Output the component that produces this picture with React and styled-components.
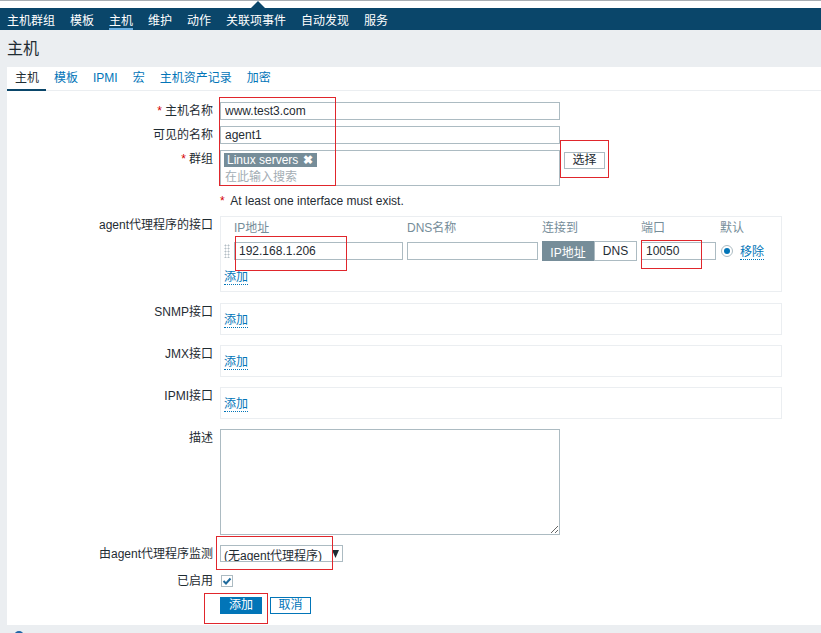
import React from 'react';
import styled, { createGlobalStyle, css } from 'styled-components';

const GlobalStyle = createGlobalStyle`
  html, body { margin: 0; padding: 0; background: #ebeef1; }
  body {
    font-family: Arial, "Liberation Sans", "Noto Sans CJK SC", sans-serif;
    font-size: 12px;
    color: #1f2c33;
  }
  * { box-sizing: border-box; }
`;

const FONT = `Arial, "Liberation Sans", "Noto Sans CJK SC", sans-serif`;

const Page = styled.div`
  position: relative;
  width: 821px;
  height: 633px;
  overflow: hidden;
  background: #ebeef1;
`;

const TopStrip = styled.div`
  height: 8px;
  background: #fff;
  border-top: 1px solid #a9aeb3;
`;

const Nav = styled.nav`
  position: relative;
  height: 22px;
  background: #0a466a;
  display: flex;
  gap: 1px;
  &::before {
    content: '';
    position: absolute;
    left: 251px;
    top: -7px;
    border-left: 7px solid transparent;
    border-right: 7px solid transparent;
    border-bottom: 7px solid #0a466a;
  }
`;

const NavItem = styled.a`
  position: relative;
  display: flex;
  align-items: center;
  padding: 0 7px;
  color: #fff;
  font-size: 12px;
  text-decoration: none;
  white-space: nowrap;
  ${(p) =>
    p.$active &&
    css`
      &::after {
        content: '';
        position: absolute;
        left: 7px;
        right: 7px;
        bottom: 0;
        height: 2px;
        background: #6aaee0;
      }
    `}
`;

const Header = styled.header`
  height: 37px;
  padding: 9px 7px 0;
`;

const Title = styled.h1`
  margin: 0;
  font-size: 16px;
  font-weight: normal;
  line-height: 20px;
  color: #1f2c33;
`;

const Panel = styled.section`
  margin-left: 7px;
  background: #fff;
  padding-bottom: 10px;
`;

const Tabs = styled.ul`
  display: flex;
  margin: 0;
  padding: 0;
  list-style: none;
  height: 24px;
  border-bottom: 1px solid #ebeef1;
`;

const Tab = styled.li`
  position: relative;
  padding: 0 7px 0 8px;
  line-height: 23px;
  white-space: nowrap;
  color: ${(p) => (p.$active ? '#1f2c33' : '#0275b8')};
  ${(p) =>
    p.$active &&
    css`
      &::after {
        content: '';
        position: absolute;
        left: 0;
        right: 0;
        bottom: -1px;
        height: 2px;
        background: #0a466a;
      }
    `}
`;

const Form = styled.div`
  padding-top: 11px;
`;

const Row = styled.div`
  display: grid;
  grid-template-columns: 206px 1fr;
  column-gap: 7px;
  margin-bottom: ${(p) => (p.$mb ?? 6)}px;
`;

const Label = styled.label`
  text-align: right;
  line-height: 18px;
  white-space: nowrap;
`;

const Req = styled.span`
  color: #d40000;
  margin-right: 3px;
`;

const Field = styled.div`
  display: flex;
  align-items: flex-start;
  gap: ${(p) => (p.$gap ?? 4)}px;
  min-height: 18px;
`;

const TextInput = styled.input`
  width: ${(p) => p.$w || 340}px;
  height: 18px;
  border: 1px solid #acbbc2;
  padding: 0 4px;
  font-family: ${FONT};
  font-size: 12px;
  color: #1f2c33;
  background: #fff;
  outline: none;
  margin: 0;
`;

const MultiSelect = styled.div`
  width: 340px;
  height: 36px;
  border: 1px solid #acbbc2;
  padding: 2px 3px;
  display: flex;
  flex-direction: column;
`;

const Tag = styled.span`
  align-self: flex-start;
  display: inline-flex;
  align-items: center;
  gap: 5px;
  height: 14px;
  padding: 0 4px 0 3px;
  background: #768d99;
  color: #fff;
  line-height: 14px;
  white-space: nowrap;
`;

const TagClose = styled.span`
  font-weight: bold;
  font-size: 12px;
`;

const Placeholder = styled.span`
  margin-top: 3px;
  padding-left: 1px;
  color: #a3adb4;
  line-height: 14px;
`;

const GreyButton = styled.button`
  margin-top: 2px;
  height: 17px;
  width: 41px;
  border: 1px solid #acbbc2;
  background: #fff;
  font-family: ${FONT};
  font-size: 12px;
  color: #1f2c33;
  padding: 0;
  line-height: 15px;
`;

const Note = styled.div`
  line-height: 18px;
  white-space: nowrap;
`;

const IfaceBox = styled.div`
  width: 562px;
  border: 1px solid #ebeef1;
  padding: ${(p) => (p.$simple ? '7px 3px 5px' : '3px 3px 5px')};
`;

const IfaceGrid = styled.div`
  display: grid;
  grid-template-columns: 6px 169px 131px 95px 75px auto;
  grid-template-rows: 16px 20px;
  column-gap: 4px;
  row-gap: 5px;
  align-items: center;
`;

const ColHead = styled.div`
  color: #768d99;
  line-height: 16px;
  white-space: nowrap;
`;

const Handle = styled.span`
  width: 6px;
  height: 14px;
  background-image: radial-gradient(circle, #b4bec5 0.9px, transparent 1.1px);
  background-size: 3px 3px;
`;

const Toggle = styled.div`
  display: flex;
  height: 20px;
`;

const ToggleBtn = styled.span`
  display: flex;
  align-items: center;
  justify-content: center;
  width: ${(p) => p.$w}px;
  border: 1px solid ${(p) => (p.$on ? '#768d99' : '#acbbc2')};
  background: ${(p) => (p.$on ? '#768d99' : '#fff')};
  color: ${(p) => (p.$on ? '#fff' : '#1f2c33')};
  white-space: nowrap;
`;

const DefaultCell = styled.div`
  display: flex;
  align-items: center;
  gap: 7px;
  padding-left: 1px;
`;

const Radio = styled.span`
  width: 12px;
  height: 12px;
  border-radius: 50%;
  border: 1px solid #acbbc2;
  display: inline-flex;
  align-items: center;
  justify-content: center;
  &::after {
    content: '';
    width: 6px;
    height: 6px;
    border-radius: 50%;
    background: #0275b8;
  }
`;

const LinkLine = styled.div`
  line-height: 18px;
  margin-top: ${(p) => (p.$mt ?? 0)}px;
`;

const Link = styled.a`
  color: #0275b8;
  text-decoration: none;
  border-bottom: 1px dotted #0275b8;
  white-space: nowrap;
`;

const TextArea = styled.textarea`
  display: block;
  width: 340px;
  height: 106px;
  border: 1px solid #acbbc2;
  margin: 0;
  font-family: ${FONT};
  font-size: 12px;
  resize: both;
`;

const FakeSelect = styled.div`
  width: 123px;
  height: 17px;
  border: 1px solid #acbbc2;
  display: flex;
  justify-content: space-between;
  overflow: hidden;
  padding: 0 3px 0 3px;
`;

const SelectText = styled.span`
  padding-top: 3px;
  line-height: 14px;
  white-space: nowrap;
`;

const SelectArrow = styled.svg`
  margin-top: 4px;
  flex: none;
`;

const CheckBox = styled.span`
  width: 12px;
  height: 12px;
  margin: 3px 0 0 1px;
  border: 1px solid #acbbc2;
  display: inline-flex;
  align-items: center;
  justify-content: center;
`;

const Button = styled.button`
  height: 17px;
  width: ${(p) => p.$w}px;
  padding: 0;
  font-family: ${FONT};
  font-size: 12px;
  line-height: 15px;
  border: 1px solid #0275b8;
  background: ${(p) => (p.$primary ? '#0275b8' : '#fff')};
  color: ${(p) => (p.$primary ? '#fff' : '#0275b8')};
`;

const Footer = styled.div`
  padding: 6px 0 0 14px;
`;

const FooterIcon = styled.span`
  display: block;
  width: 10px;
  height: 10px;
  border-radius: 50%;
  background: #1f65a6;
`;

const Mark = styled.div`
  position: absolute;
  left: ${(p) => p.$x}px;
  top: ${(p) => p.$y}px;
  width: ${(p) => p.$w}px;
  height: ${(p) => p.$h}px;
  border: 1px solid #e0262c;
  pointer-events: none;
`;

const navItems = ['主机群组', '模板', '主机', '维护', '动作', '关联项事件', '自动发现', '服务'];
const tabs = ['主机', '模板', 'IPMI', '宏', '主机资产记录', '加密'];
const marks = [
  { x: 219, y: 97, w: 117, h: 89 },
  { x: 560, y: 140, w: 49, h: 38 },
  { x: 235, y: 236, w: 112, h: 35 },
  { x: 641, y: 240, w: 61, h: 29 },
  { x: 216, y: 536, w: 117, h: 34 },
  { x: 204, y: 593, w: 64, h: 31 },
];

function SimpleIface({ label }) {
  return (
    <Row $mb={10}>
      <Label>{label}</Label>
      <IfaceBox $simple>
        <LinkLine>
          <Link>添加</Link>
        </LinkLine>
      </IfaceBox>
    </Row>
  );
}

export default function App() {
  return (
    <Page>
      <GlobalStyle />
      <TopStrip />
      <Nav>
        {navItems.map((n) => (
          <NavItem key={n} $active={n === '主机'}>
            {n}
          </NavItem>
        ))}
      </Nav>
      <Header>
        <Title>主机</Title>
      </Header>
      <Panel>
        <Tabs>
          {tabs.map((t, i) => (
            <Tab key={t} $active={i === 0}>
              {t}
            </Tab>
          ))}
        </Tabs>
        <Form>
          <Row>
            <Label>
              <Req>*</Req>主机名称
            </Label>
            <Field>
              <TextInput defaultValue="www.test3.com" />
            </Field>
          </Row>
          <Row>
            <Label>可见的名称</Label>
            <Field>
              <TextInput defaultValue="agent1" />
            </Field>
          </Row>
          <Row>
            <Label>
              <Req>*</Req>群组
            </Label>
            <Field>
              <MultiSelect>
                <Tag>
                  Linux servers <TagClose>✖</TagClose>
                </Tag>
                <Placeholder>在此输入搜索</Placeholder>
              </MultiSelect>
              <GreyButton>选择</GreyButton>
            </Field>
          </Row>
          <Row>
            <Label />
            <Note>
              <Req>*</Req> At least one interface must exist.
            </Note>
          </Row>
          <Row $mb={11}>
            <Label>agent代理程序的接口</Label>
            <IfaceBox>
              <IfaceGrid>
                <span />
                <ColHead>IP地址</ColHead>
                <ColHead>DNS名称</ColHead>
                <ColHead>连接到</ColHead>
                <ColHead>端口</ColHead>
                <ColHead>默认</ColHead>
                <Handle />
                <TextInput $w={169} defaultValue="192.168.1.206" />
                <TextInput $w={131} defaultValue="" />
                <Toggle>
                  <ToggleBtn $on $w={52}>IP地址</ToggleBtn>
                  <ToggleBtn $w={43}>DNS</ToggleBtn>
                </Toggle>
                <TextInput $w={75} defaultValue="10050" />
                <DefaultCell>
                  <Radio />
                  <Link>移除</Link>
                </DefaultCell>
              </IfaceGrid>
              <LinkLine $mt={7}>
                <Link>添加</Link>
              </LinkLine>
            </IfaceBox>
          </Row>
          <SimpleIface label="SNMP接口" />
          <SimpleIface label="JMX接口" />
          <SimpleIface label="IPMI接口" />
          <Row $mb={10}>
            <Label>描述</Label>
            <Field>
              <TextArea />
            </Field>
          </Row>
          <Row $mb={9}>
            <Label>由agent代理程序监测</Label>
            <Field>
              <FakeSelect>
                <SelectText>(无agent代理程序)</SelectText>
                <SelectArrow width="7" height="8" viewBox="0 0 7 8">
                  <path d="M0 0 H7 L3.5 8 Z" fill="#1f2c33" />
                </SelectArrow>
              </FakeSelect>
            </Field>
          </Row>
          <Row $mb={7}>
            <Label>已启用</Label>
            <Field>
              <CheckBox>
                <svg width="10" height="10" viewBox="0 0 10 10">
                  <path d="M1.5 5 L4 7.5 L8.5 2.5" fill="none" stroke="#1f6a9c" strokeWidth="2" />
                </svg>
              </CheckBox>
            </Field>
          </Row>
          <Row $mb={0}>
            <Label />
            <Field $gap={8}>
              <Button $primary $w={42}>添加</Button>
              <Button $w={41}>取消</Button>
            </Field>
          </Row>
        </Form>
      </Panel>
      <Footer>
        <FooterIcon />
      </Footer>
      {marks.map((m, i) => (
        <Mark key={i} $x={m.x} $y={m.y} $w={m.w} $h={m.h} />
      ))}
    </Page>
  );
}
